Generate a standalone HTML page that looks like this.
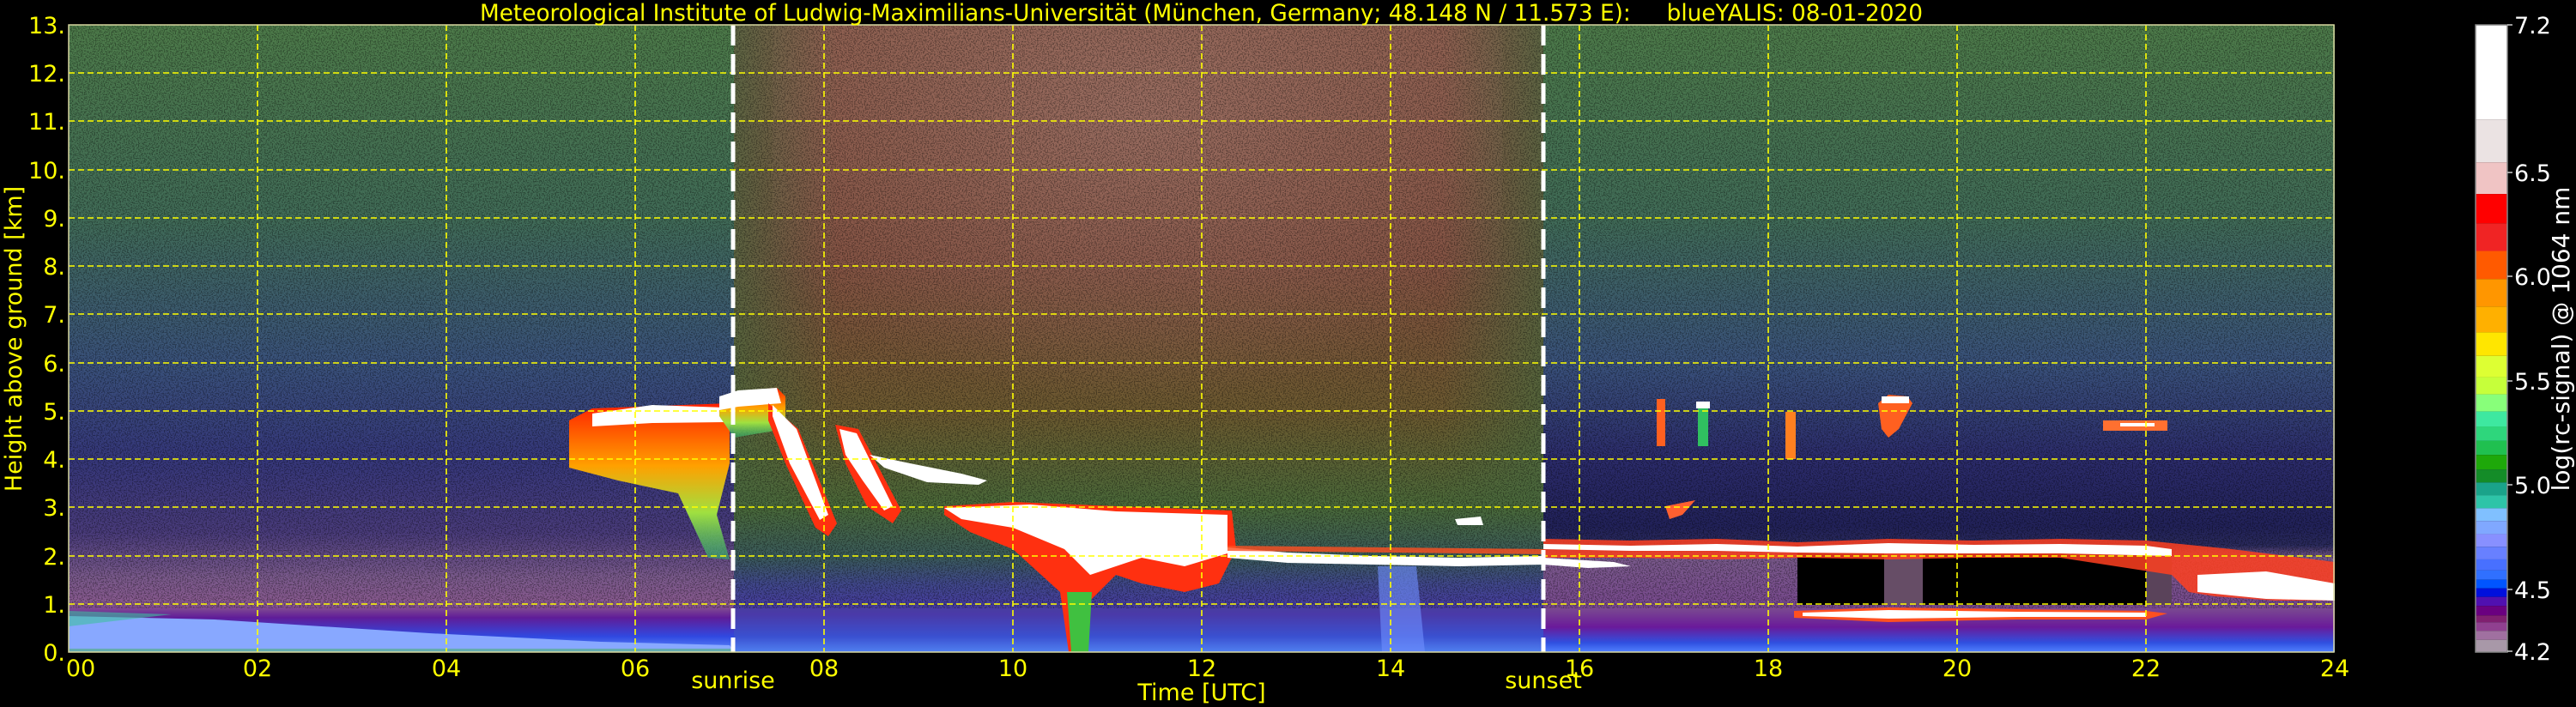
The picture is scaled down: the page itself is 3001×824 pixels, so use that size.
<!DOCTYPE html>
<html><head><meta charset="utf-8"><style>
html,body{margin:0;padding:0;background:#000;}
svg{display:block}
text{font-family:"DejaVu Sans","Liberation Sans",sans-serif;}
</style></head><body>
<svg width="3001" height="824" viewBox="0 0 3001 824" xmlns="http://www.w3.org/2000/svg">
<defs>
<linearGradient id="gl" x1="0" y1="29" x2="0" y2="760" gradientUnits="userSpaceOnUse">
<stop offset="0" stop-color="#4e7c4a"/><stop offset="0.31" stop-color="#416c58"/>
<stop offset="0.54" stop-color="#3a527c"/><stop offset="0.69" stop-color="#36387c"/>
<stop offset="0.81" stop-color="#4a3c7c"/><stop offset="0.88" stop-color="#7a5a8c"/>
<stop offset="0.925" stop-color="#8a5a90"/><stop offset="0.945" stop-color="#601c98"/>
<stop offset="0.975" stop-color="#3048e0"/><stop offset="1" stop-color="#6090ff"/>
</linearGradient>
<linearGradient id="gm" x1="0" y1="29" x2="0" y2="760" gradientUnits="userSpaceOnUse">
<stop offset="0" stop-color="#8c5c4c"/><stop offset="0.38" stop-color="#825040"/>
<stop offset="0.62" stop-color="#6c5a30"/><stop offset="0.77" stop-color="#4a6a3a"/>
<stop offset="0.85" stop-color="#3a5a5c"/><stop offset="0.89" stop-color="#40488a"/>
<stop offset="0.94" stop-color="#4a3aa8"/><stop offset="0.975" stop-color="#3a50d0"/>
<stop offset="1" stop-color="#5080f0"/>
</linearGradient>
<linearGradient id="gr" x1="0" y1="29" x2="0" y2="760" gradientUnits="userSpaceOnUse">
<stop offset="0" stop-color="#4e7c4a"/><stop offset="0.31" stop-color="#416c58"/>
<stop offset="0.54" stop-color="#3a527c"/><stop offset="0.69" stop-color="#2c2c6c"/>
<stop offset="0.80" stop-color="#22225a"/><stop offset="0.83" stop-color="#2a2a5c"/>
<stop offset="0.85" stop-color="#7a5a8c"/><stop offset="0.93" stop-color="#7a4a90"/>
<stop offset="0.96" stop-color="#6a1a9a"/><stop offset="0.985" stop-color="#3050e0"/>
<stop offset="1" stop-color="#5080ff"/>
</linearGradient>
<linearGradient id="edgeL" x1="0" x2="1"><stop offset="0" stop-color="#4a6a40" stop-opacity="0.7"/><stop offset="1" stop-color="#4a6a40" stop-opacity="0"/></linearGradient>
<linearGradient id="edgeR" x1="0" x2="1"><stop offset="0" stop-color="#4a6a40" stop-opacity="0"/><stop offset="1" stop-color="#4a6a40" stop-opacity="0.7"/></linearGradient>
<radialGradient id="pk" cx="0.5" cy="0.2" r="0.6"><stop offset="0" stop-color="#b08880" stop-opacity="0.45"/><stop offset="1" stop-color="#b08880" stop-opacity="0"/></radialGradient>
<linearGradient id="cl" x1="0" y1="0" x2="0" y2="1"><stop offset="0" stop-color="#ff2000"/><stop offset="0.4" stop-color="#ffa000"/><stop offset="0.7" stop-color="#a0e040"/><stop offset="1" stop-color="#30b070" stop-opacity="0.6"/></linearGradient>
<filter id="nz" x="0" y="0" width="100%" height="100%">
<feTurbulence type="fractalNoise" baseFrequency="0.7" numOctaves="1" seed="3"/>
<feColorMatrix type="matrix" values="0 0 0 0 0  0 0 0 0 0  0 0 0 0 0  -6 0 0 0 3.2"/>
</filter>
</defs>

<!-- plot background -->
<rect x="80" y="29" width="775" height="731" fill="url(#gl)"/>
<rect x="855" y="29" width="943" height="731" fill="url(#gm)"/>
<rect x="1798" y="29" width="922" height="731" fill="url(#gr)"/>
<rect x="855" y="29" width="120" height="560" fill="url(#edgeL)"/>
<rect x="1680" y="29" width="118" height="560" fill="url(#edgeR)"/>
<rect x="900" y="29" width="850" height="550" fill="url(#pk)"/>
<!-- bottom left light blue wedge -->
<polygon points="80,718 250,722 500,738 700,748 850,752 855,760 80,760" fill="#88a8ff"/>
<polygon points="80,712 200,716 80,730" fill="#40c0a0" opacity="0.6"/>
<polygon points="80,756 855,756 855,760 80,760" fill="#40b060" opacity="0.5"/>
<!-- speckle noise -->
<rect x="80" y="29" width="2640" height="680" filter="url(#nz)" opacity="0.35"/>

<!-- cloud A -->
<polygon points="663,490 690,476 850,470 850,540 835,600 850,652 825,650 790,575 720,560 663,545" fill="url(#cl)"/>
<polygon points="690,482 760,472 845,475 845,492 760,493 690,497" fill="#fff"/>
<!-- cloud B etc -->
<polygon points="838,470 862,456 905,452 915,462 915,500 855,510 838,485" fill="url(#cl)"/>
<polygon points="838,462 860,455 905,452 910,470 860,474 838,478" fill="#fff"/>
<polygon points="895,470 930,500 975,610 965,625 950,615 915,540 895,490" fill="#ff3010"/>
<polygon points="900,472 928,500 965,600 955,606 920,540 900,485" fill="#fff"/>
<polygon points="973,495 1000,500 1050,595 1040,610 1010,590 985,540" fill="#ff3010"/>
<polygon points="978,500 998,505 1040,590 1030,595 1005,560 985,530" fill="#fff"/>
<polygon points="1013,530 1060,540 1120,552 1150,560 1140,565 1080,562 1030,545" fill="#fff"/>
<polygon points="1100,590 1180,585 1300,590 1435,595 1440,640 1420,680 1380,690 1330,680 1300,670 1270,700 1265,760 1245,760 1235,690 1180,640 1130,620 1100,600" fill="#ff3010"/>
<polygon points="1243,690 1272,690 1268,760 1248,760" fill="#40c040"/>
<polygon points="1100,592 1200,588 1300,596 1430,600 1430,645 1380,660 1330,650 1300,660 1270,670 1240,640 1180,615 1120,605" fill="#fff"/>
<polygon points="1430,638 1500,644 1600,648 1700,650 1798,648 1798,658 1700,660 1600,658 1500,656 1430,650" fill="#fff"/>
<polygon points="1430,636 1798,640 1798,646 1430,642" fill="#ff5020" opacity="0.8"/>
<polygon points="1695,605 1725,602 1728,612 1698,612" fill="#fff"/>
<polygon points="1605,660 1650,660 1660,760 1610,760" fill="#7090ff" opacity="0.6"/>

<!-- night black region -->
<polygon points="2094,640 2530,640 2530,705 2094,705" fill="#000"/>
<polygon points="2195,645 2240,645 2240,705 2195,705" fill="#806080" opacity="0.8"/>
<polygon points="2500,645 2530,645 2530,705 2500,705" fill="#806080" opacity="0.7"/>
<!-- low clouds -->
<polygon points="1798,628 1900,630 2000,628 2094,632 2200,628 2300,630 2400,628 2500,630 2600,640 2720,655 2720,700 2650,700 2580,695 2550,690 2530,670 2400,650 2300,650 2200,652 2100,650 2000,652 1900,650 1798,650" fill="#ff4020" opacity="0.85"/>
<polygon points="1798,634 1900,636 2000,634 2094,637 2200,633 2300,635 2400,634 2500,636 2530,640 2530,648 2400,645 2300,645 2200,645 2094,644 2000,642 1900,642 1798,640" fill="#fff"/>
<polygon points="1798,650 1880,655 1900,660 1850,662 1798,658" fill="#fff"/>
<polygon points="2560,670 2640,666 2720,680 2720,700 2640,698 2560,690" fill="#fff"/>
<polygon points="2090,712 2200,708 2350,710 2500,712 2525,715 2500,722 2350,722 2200,725 2090,720" fill="#ff5020"/>
<polygon points="2100,714 2200,711 2350,713 2500,714 2500,719 2350,719 2200,721 2100,718" fill="#fff"/>
<!-- small clouds -->
<rect x="1930" y="465" width="10" height="55" fill="#ff6020"/>
<rect x="1978" y="470" width="12" height="50" fill="#30c060"/><rect x="1976" y="468" width="16" height="8" fill="#fff"/>
<rect x="2080" y="480" width="12" height="55" fill="#ff8020"/>
<polygon points="2188,470 2200,460 2222,462 2228,470 2212,500 2200,510 2192,500" fill="#ff6020"/>
<rect x="2192" y="462" width="32" height="8" fill="#fff"/>
<rect x="2450" y="490" width="75" height="12" fill="#ff7030"/><rect x="2470" y="493" width="40" height="4" fill="#fff"/>
<polygon points="1940,590 1975,583 1960,600 1945,605" fill="#ff6030"/>

<!-- grid -->
<g stroke="#ffff00" stroke-width="1.6" stroke-dasharray="7,4" fill="none">
<path d="M80 704H2720M80 648H2720M80 591H2720M80 535H2720M80 479H2720M80 423H2720M80 366H2720M80 310H2720M80 254H2720M80 198H2720M80 141H2720M80 85H2720"/>
<path d="M300 29V760M520 29V760M740 29V760M960 29V760M1180 29V760M1400 29V760M1620 29V760M1840 29V760M2060 29V760M2280 29V760M2500 29V760"/>
</g>
<g stroke="#fff" stroke-width="5" stroke-dasharray="24,10">
<path d="M854 29V760M1798 29V760"/>
</g>
<rect x="80" y="29" width="2639" height="731" fill="none" stroke="#d8d8a0" stroke-width="1.5"/>

<text x="559" y="24" font-size="27" fill="#ffff00" textLength="1681" lengthAdjust="spacingAndGlyphs" xml:space="preserve">Meteorological Institute of Ludwig-Maximilians-Universität (München, Germany; 48.148 N / 11.573 E):     blueYALIS: 08-01-2020</text>

<g font-size="27" fill="#ffff00" text-anchor="end">
<text x="76" y="39">13.</text><text x="76" y="95">12.</text><text x="76" y="151">11.</text>
<text x="76" y="208">10.</text><text x="76" y="264">9.</text><text x="76" y="320">8.</text>
<text x="76" y="376">7.</text><text x="76" y="433">6.</text><text x="76" y="489">5.</text>
<text x="76" y="545">4.</text><text x="76" y="601">3.</text><text x="76" y="658">2.</text>
<text x="76" y="714">1.</text><text x="76" y="770">0.</text>
</g>
<text transform="translate(25,395) rotate(-90)" font-size="27" fill="#ffff00" text-anchor="middle">Height above ground [km]</text>
<g font-size="27" fill="#ffff00" text-anchor="middle">
<text x="94" y="788">00</text><text x="300" y="788">02</text><text x="520" y="788">04</text>
<text x="740" y="788">06</text><text x="960" y="788">08</text><text x="1180" y="788">10</text>
<text x="1400" y="788">12</text><text x="1620" y="788">14</text><text x="1840" y="788">16</text>
<text x="2060" y="788">18</text><text x="2280" y="788">20</text><text x="2500" y="788">22</text>
<text x="2720" y="788">24</text>
<text x="854" y="802">sunrise</text><text x="1798" y="802">sunset</text>
<text x="1400" y="816">Time [UTC]</text>
</g>

<svg x="2884" y="29" width="37" height="731" viewBox="0 56 1 1387" preserveAspectRatio="none">
<rect x="0" y="56" width="1" height="209" fill="#ffffff"/>
<rect x="0" y="265" width="1" height="95" fill="#ebe3e3"/>
<rect x="0" y="360" width="1" height="70" fill="#f0c4c4"/>
<rect x="0" y="430" width="1" height="65" fill="#ff0000"/>
<rect x="0" y="495" width="1" height="61" fill="#f02424"/>
<rect x="0" y="556" width="1" height="62" fill="#ff5a00"/>
<rect x="0" y="618" width="1" height="61" fill="#ff9600"/>
<rect x="0" y="679" width="1" height="57" fill="#ffb000"/>
<rect x="0" y="736" width="1" height="52" fill="#ffe600"/>
<rect x="0" y="788" width="1" height="47" fill="#ddff33"/>
<rect x="0" y="835" width="1" height="38" fill="#c6ff3a"/>
<rect x="0" y="873" width="1" height="38" fill="#88ff7a"/>
<rect x="0" y="911" width="1" height="33" fill="#3ee8a0"/>
<rect x="0" y="944" width="1" height="32" fill="#2ed67c"/>
<rect x="0" y="976" width="1" height="31" fill="#20c050"/>
<rect x="0" y="1007" width="1" height="32" fill="#1ea80a"/>
<rect x="0" y="1039" width="1" height="29" fill="#148c28"/>
<rect x="0" y="1068" width="1" height="28" fill="#1aa38a"/>
<rect x="0" y="1096" width="1" height="29" fill="#2ec4a8"/>
<rect x="0" y="1125" width="1" height="28" fill="#80c0ff"/>
<rect x="0" y="1153" width="1" height="29" fill="#80a8ff"/>
<rect x="0" y="1182" width="1" height="28" fill="#8890ff"/>
<rect x="0" y="1210" width="1" height="28" fill="#6880ff"/>
<rect x="0" y="1238" width="1" height="24" fill="#4870ff"/>
<rect x="0" y="1262" width="1" height="21" fill="#3070ff"/>
<rect x="0" y="1283" width="1" height="19" fill="#0055ff"/>
<rect x="0" y="1302" width="1" height="19" fill="#0010dd"/>
<rect x="0" y="1321" width="1" height="20" fill="#5010b0"/>
<rect x="0" y="1341" width="1" height="21" fill="#6a0080"/>
<rect x="0" y="1362" width="1" height="15" fill="#802070"/>
<rect x="0" y="1377" width="1" height="19" fill="#904090"/>
<rect x="0" y="1396" width="1" height="20" fill="#a070a0"/>
<rect x="0" y="1416" width="1" height="27" fill="#a898a8"/>
</svg>
<rect x="2884" y="29" width="37" height="731" fill="none" stroke="#888" stroke-width="1.5"/>
<g stroke="#ccc" stroke-width="1.5"><path d="M2921 29h6M2921 201h6M2921 322h6M2921 444h6M2921 565h6M2921 687h6M2921 759h6"/></g>
<g font-size="27" fill="#fff">
<text x="2929" y="39">7.2</text><text x="2929" y="211">6.5</text><text x="2929" y="332">6.0</text>
<text x="2929" y="454">5.5</text><text x="2929" y="575">5.0</text><text x="2929" y="697">4.5</text>
<text x="2929" y="769">4.2</text>
</g>
<text transform="translate(2993,395) rotate(-90)" font-size="28" fill="#fff" text-anchor="middle">log(rc-signal) @ 1064 nm</text>
</svg>
</body></html>
